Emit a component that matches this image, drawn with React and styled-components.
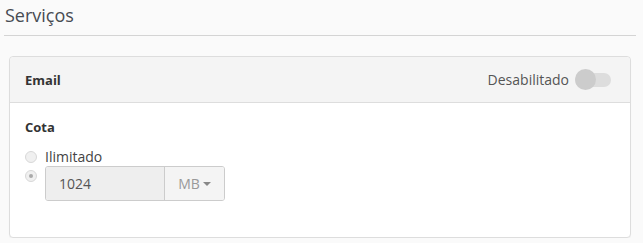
import React from "react";
import styled, { createGlobalStyle } from "styled-components";

const GlobalStyle = createGlobalStyle`
  body {
    margin: 0;
    background: #fafafa;
    font-family: "Open Sans", "Liberation Sans", sans-serif;
    color: #333;
  }
`;

const Page = styled.div`
  padding: 0 7px 0 4px;
`;

const Title = styled.h3`
  margin: 0;
  padding: 3px 0 8px 1px;
  font-size: 18px;
  font-weight: 400;
  line-height: 24px;
  color: #474b52;
  border-bottom: 1px solid #d4d4d4;
`;

const Panel = styled.section`
  margin: 20px 5px 0 5px;
  background: #fff;
  border: 1px solid #ddd;
  border-radius: 4px;
  box-shadow: 0 1px 1px rgba(0, 0, 0, 0.04);
`;

const PanelHeader = styled.header`
  display: flex;
  align-items: center;
  justify-content: space-between;
  height: 45px;
  padding: 0 19px 0 15px;
  background: #f4f4f4;
  border-bottom: 1px solid #ddd;
  border-radius: 4px 4px 0 0;
`;

const PanelTitle = styled.span`
  font-size: 13px;
  font-weight: 700;
  color: #333;
`;

const SwitchLabel = styled.label`
  display: flex;
  align-items: center;
  gap: 6px;
  font-size: 14px;
  color: #555;
`;

const Track = styled.span`
  position: relative;
  display: inline-block;
  width: 36px;
  height: 14px;
  border-radius: 7px;
  background: #ddd;
`;

const Knob = styled.span`
  position: absolute;
  left: 0;
  top: -4px;
  width: 21px;
  height: 21px;
  border-radius: 50%;
  background: #ccc;
`;

const PanelBody = styled.div`
  padding: 15px 15px 36px 15px;
`;

const FieldLabel = styled.div`
  font-size: 13px;
  font-weight: 700;
  line-height: 18px;
  margin-bottom: 12px;
`;

const Option = styled.label`
  display: flex;
  align-items: ${(p) => (p.$top ? "flex-start" : "center")};
  gap: 8px;
  font-size: 14px;
  line-height: 18px;
  color: #444;
`;

const Radio = styled.span`
  flex: none;
  position: relative;
  width: 10px;
  height: 10px;
  margin-top: ${(p) => (p.$top ? "4px" : "0")};
  border-radius: 50%;
  border: 1px solid #d8d8d8;
  background: #f0f0f0;
  &::after {
    content: "";
    display: ${(p) => (p.$checked ? "block" : "none")};
    position: absolute;
    left: 3px;
    top: 3px;
    width: 4px;
    height: 4px;
    border-radius: 50%;
    background: #aaa;
  }
`;

const InputGroup = styled.div`
  display: flex;
  margin-top: 0;
  height: 33px;
  border: 1px solid #ccc;
  border-radius: 3px;
  overflow: hidden;
`;

const Input = styled.div`
  width: 105px;
  padding-left: 13px;
  display: flex;
  align-items: center;
  background: #eee;
  border-right: 1px solid #ccc;
  font-size: 14px;
  color: #555;
`;

const Addon = styled.div`
  width: 59px;
  display: flex;
  align-items: center;
  justify-content: center;
  gap: 3px;
  background: #f4f4f4;
  font-size: 14px;
  color: #999;
`;

const Caret = styled.span`
  width: 0;
  height: 0;
  border-left: 4px solid transparent;
  border-right: 4px solid transparent;
  border-top: 4px solid #888;
`;

export default function App() {
  return (
    <>
      <GlobalStyle />
      <Page>
        <Title>Serviços</Title>
        <Panel>
          <PanelHeader>
            <PanelTitle>Email</PanelTitle>
            <SwitchLabel>
              Desabilitado
              <Track>
                <Knob />
              </Track>
            </SwitchLabel>
          </PanelHeader>
          <PanelBody>
            <FieldLabel>Cota</FieldLabel>
            <Option>
              <Radio />
              Ilimitado
            </Option>
            <Option $top>
              <Radio $top $checked />
              <InputGroup>
                <Input>1024</Input>
                <Addon>
                  MB <Caret />
                </Addon>
              </InputGroup>
            </Option>
          </PanelBody>
        </Panel>
      </Page>
    </>
  );
}
